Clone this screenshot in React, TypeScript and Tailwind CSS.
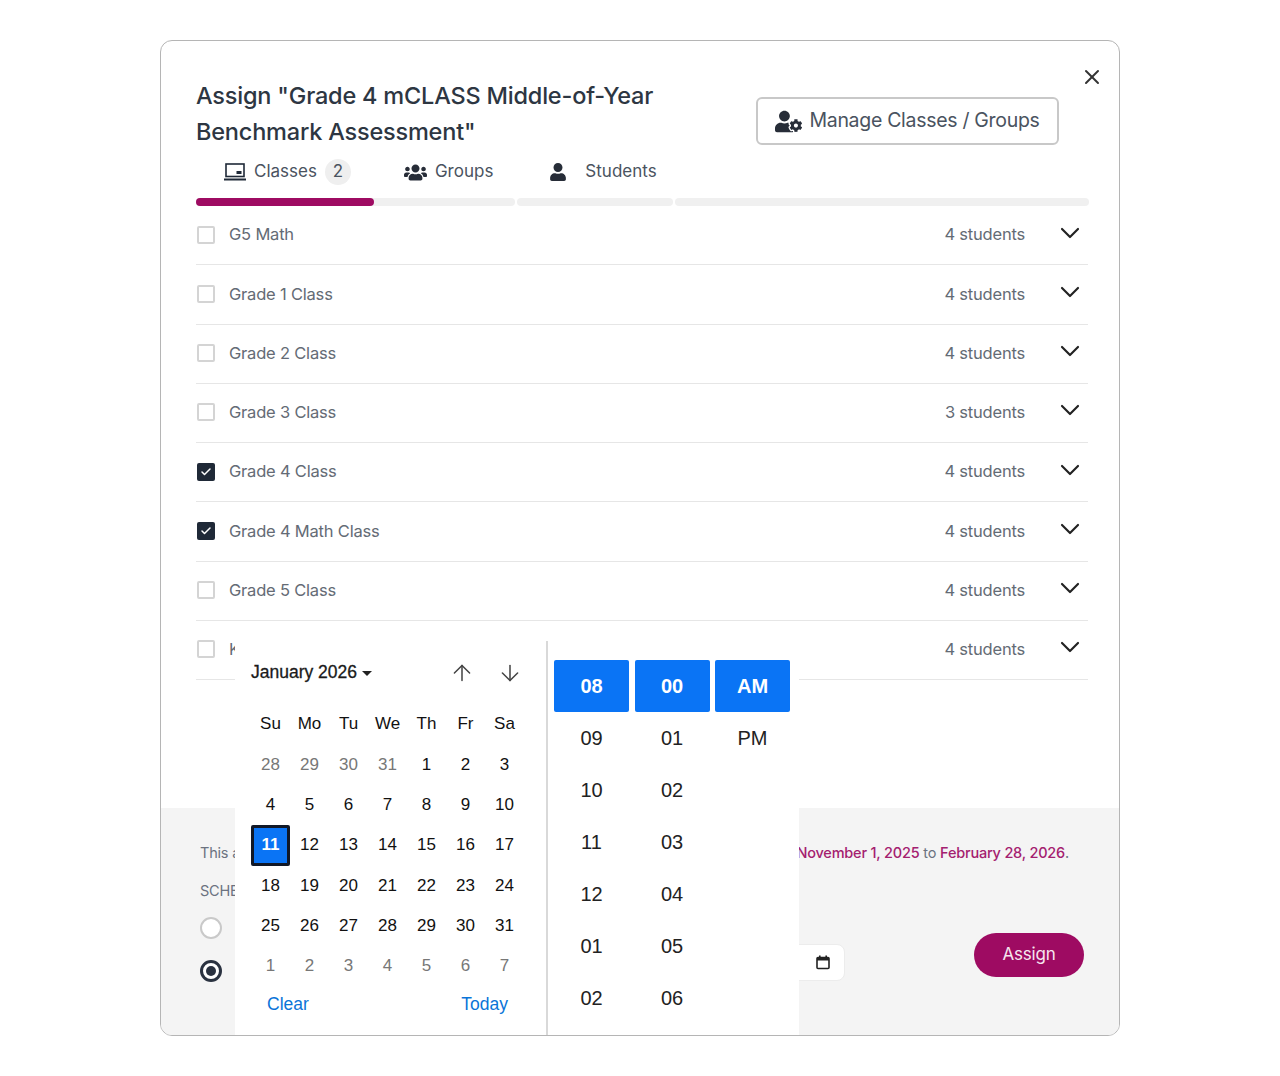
import { ChevronDown, X, ArrowUp, ArrowDown, Check } from 'lucide-react';
import { FaUsers, FaUser, FaUserCog } from 'react-icons/fa';

const classes = [
  { name: 'G5 Math', students: 4, checked: false },
  { name: 'Grade 1 Class', students: 4, checked: false },
  { name: 'Grade 2 Class', students: 4, checked: false },
  { name: 'Grade 3 Class', students: 3, checked: false },
  { name: 'Grade 4 Class', students: 4, checked: true },
  { name: 'Grade 4 Math Class', students: 4, checked: true },
  { name: 'Grade 5 Class', students: 4, checked: false },
  { name: 'Kindergarten Class', students: 4, checked: false },
];

const weekDays = ['Su', 'Mo', 'Tu', 'We', 'Th', 'Fr', 'Sa'];

const days = [
  { n: 28, muted: true }, { n: 29, muted: true }, { n: 30, muted: true }, { n: 31, muted: true },
  ...Array.from({ length: 31 }, (_, i) => ({ n: i + 1, muted: false })),
  ...Array.from({ length: 7 }, (_, i) => ({ n: i + 1, muted: true })),
];

const timeColumns = [
  ['08', '09', '10', '11', '12', '01', '02'],
  ['00', '01', '02', '03', '04', '05', '06'],
  ['AM', 'PM'],
];

function LaptopIcon() {
  return (
    <svg width="22" height="18" viewBox="0 0 22 18" fill="none">
      <rect x="2" y="1" width="18" height="12.5" stroke="#1f2937" strokeWidth="1.6" />
      <rect x="12.5" y="8" width="5" height="3" fill="#1f2937" />
      <rect x="0" y="15.5" width="22" height="2" fill="#1f2937" />
    </svg>
  );
}

function CalendarIcon() {
  return (
    <svg width="14" height="15" viewBox="0 0 14 15" fill="none">
      <rect x="1" y="2.5" width="12" height="11" rx="1" stroke="#222" strokeWidth="1.6" />
      <rect x="1" y="2.5" width="12" height="3" fill="#222" />
      <rect x="3" y="0.5" width="1.6" height="2" fill="#222" />
      <rect x="9.4" y="0.5" width="1.6" height="2" fill="#222" />
    </svg>
  );
}

function DatePopover() {
  return (
    <div className="absolute left-[74px] top-[600px] flex h-[396px] w-[564px] overflow-hidden bg-white font-['Liberation_Sans',sans-serif]">
      <div className="w-[313px] border-r-2 border-[#d9d9d9] pl-4 pr-[22px]">
        <div className="flex h-[62px] items-center justify-between pt-[1px]">
          <div className="flex items-center gap-[5px] text-[17.5px] font-normal text-[#1a1a1a] [-webkit-text-stroke:0.3px_#1a1a1a]">
            January 2026
            <span className="mt-[1px] h-0 w-0 border-x-[5px] border-t-[5px] border-x-transparent border-t-[#222]" />
          </div>
          <div className="mr-[1px] flex items-center gap-[22px] text-[#444]">
            <ArrowUp size={26} strokeWidth={1.4} />
            <ArrowDown size={26} strokeWidth={1.4} />
          </div>
        </div>
        <div className="grid grid-cols-7 text-center text-[17px] leading-[40.2px] text-[#111]">
          {weekDays.map((d) => (
            <div key={d} className="h-[42px] pt-[1px]">{d}</div>
          ))}
          {days.map((d, i) => (
            <div
              key={i}
              className={
                d.n === 11 && !d.muted
                  ? 'h-[40.2px] rounded-[2px] border-[3px] border-[#111827] bg-[#0a74f5] font-bold leading-[34px] text-white'
                  : `h-[40.2px] ${d.muted ? 'text-[#777]' : ''}`
              }
            >
              {d.n}
            </div>
          ))}
        </div>
        <div className="mt-[5px] flex justify-between px-4 text-[17.5px] text-[#0a74d8]">
          <span>Clear</span>
          <span>Today</span>
        </div>
      </div>
      <div className="flex gap-[5.5px] pl-[6px] pt-[19px] text-[20px] text-[#222]">
        {timeColumns.map((col, i) => (
          <div key={i} className="w-[75px] text-center">
            {col.map((v, j) => (
              <div
                key={v}
                className={
                  j === 0
                    ? 'h-[52px] rounded-[2px] bg-[#0a74f5] font-bold leading-[52px] text-white'
                    : 'h-[52px] leading-[52px]'
                }
              >
                {v}
              </div>
            ))}
          </div>
        ))}
      </div>
    </div>
  );
}

export default function App() {
  return (
    <div className="min-h-[1076px] bg-white pt-10 font-['Inter',sans-serif]">
      <div className="relative mx-auto flex h-[996px] w-[960px] flex-col overflow-hidden rounded-xl border border-[#b5b5b5]">
        <button className="absolute right-[15px] top-[24px] text-[#333]">
          <X size={24} strokeWidth={2} />
        </button>

        <div className="h-[767px] px-[35px]">
          <div className="flex items-start justify-between pt-[37px]">
            <h2 className="w-[480px] text-[23.5px] font-medium leading-9 tracking-[-0.2px] text-[#2d3642]">
              Assign "Grade 4 mCLASS Middle-of-Year Benchmark Assessment"
            </h2>
            <button className="mr-[25px] mt-[19px] flex h-12 w-[303px] items-center justify-center gap-[7px] rounded-md border-2 border-[#c8c8c8] text-[19.5px] tracking-[-0.3px] text-[#4a5360]">
              <FaUserCog size={27} className="text-[#272d38]" />
              Manage Classes / Groups
            </button>
          </div>

          <div className="mt-[3px] flex h-[38px] items-center pl-7 text-[17px] text-[#4a5360]">
            <LaptopIcon />
            <span className="ml-2">Classes</span>
            <span className="ml-2 flex h-[26px] w-[26px] items-center justify-center rounded-full bg-[#efefef]">2</span>
            <FaUsers size={23} className="ml-[53px] text-[#272d38]" />
            <span className="ml-2">Groups</span>
            <FaUser size={18} className="ml-[56px] text-[#272d38]" />
            <span className="ml-[18px]">Students</span>
          </div>

          <div className="mt-[7px] flex h-2 w-[893px] gap-[2px]">
            <div className="flex w-[319px] rounded-full bg-[#f0f0f0]">
              <div className="w-[178px] rounded-full bg-[#9e0b62]" />
            </div>
            <div className="w-[156px] rounded-full bg-[#f0f0f0]" />
            <div className="flex-1 rounded-full bg-[#f0f0f0]" />
          </div>

          <div className="w-[892px]">
            {classes.map((c) => (
              <div key={c.name} className="flex h-[59.25px] items-center border-b border-[#e6e6e6] pb-[1px] text-[16.5px] tracking-[-0.2px] text-[#646b75]">
                <span
                  className={
                    c.checked
                      ? 'ml-[1px] flex h-[18px] w-[18px] items-center justify-center rounded-[2px] bg-[#1f2937] text-white'
                      : 'ml-[1px] h-[18px] w-[18px] rounded-[2px] border-2 border-[#d4d4d4] bg-white'
                  }
                >
                  {c.checked && <Check size={12} strokeWidth={3} />}
                </span>
                <span className="ml-[14px]">{c.name}</span>
                <span className="ml-auto">{c.students} students</span>
                <ChevronDown size={32} strokeWidth={1.6} className="ml-[29px] mr-[2px] -translate-y-[2px] text-[#222]" />
              </div>
            ))}
          </div>
        </div>

        <div className="relative flex-1 bg-[#f4f4f4] pl-[39px] pr-[50px] pt-[34px] text-[14.5px] tracking-[-0.2px] text-[#6b7280]">
          <div className="flex justify-between">
            <span>This assessment window runs from</span>
            <span>
              <span className="font-medium text-[#a4206f]">November 1, 2025</span> to{' '}
              <span className="font-medium text-[#a4206f]">February 28, 2026</span>.
            </span>
          </div>
          <div className="mt-[16px]">SCHEDULE</div>
          <div className="mt-[15px] h-[22px] w-[22px] rounded-full border-2 border-[#c9c9c9] bg-white" />
          <div className="mt-[21px] flex h-[22px] w-[22px] items-center justify-center rounded-full border-[3px] border-[#2a3240] bg-white">
            <div className="h-[10px] w-[10px] rounded-full bg-[#2a3240]" />
          </div>
          <div className="absolute left-[500px] top-[136px] flex h-[37px] w-[184px] items-center justify-end rounded-lg border border-[#ececec] bg-white pr-[14px]">
            <CalendarIcon />
          </div>
          <button className="absolute right-[35px] top-[125px] h-[44px] w-[110px] rounded-full bg-[#9e0b62] text-[17px] text-[#f6e6ef]">
            Assign
          </button>
        </div>

        <DatePopover />
      </div>
    </div>
  );
}
